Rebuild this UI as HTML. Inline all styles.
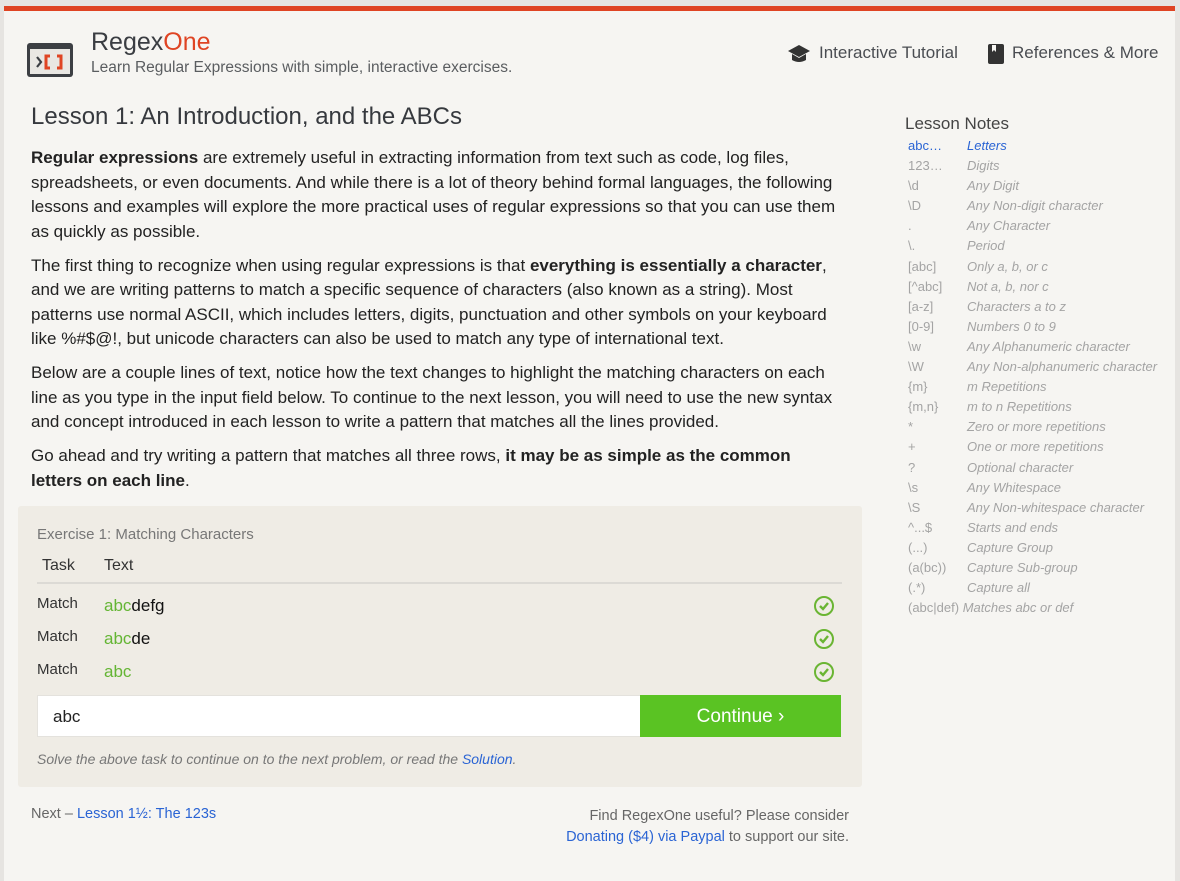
<!DOCTYPE html>
<html><head><meta charset="utf-8"><style>
*{margin:0;padding:0;box-sizing:border-box}
body{width:1180px;height:881px;background:#e6e4e1;font-family:"Liberation Sans",sans-serif;overflow:hidden;position:relative}
#page{position:absolute;left:4px;top:6px;width:1171px;height:875px;background:#f6f5f2;border-top:5px solid #df4423}
.abs{position:absolute}
.logo{left:23px;top:32px;width:46px;height:34px;background:#3c3f44;border-radius:3px}
.logo i{position:absolute;left:3px;top:6px;width:40px;height:25px;background:#e9e7e3}
h1{font-weight:normal;font-size:25px;color:#3a3d42;left:87px;top:17px}
.sub{font-size:15.5px;color:#5a5d60;left:87px;top:48px}
.nav{font-size:17px;color:#4a4d52;top:32px}
h2{font-weight:normal;font-size:24px;color:#36393e;left:27px;top:92px}
.txt{left:27px;top:135px;width:860px;font-size:17px;line-height:24.5px;color:#222;white-space:nowrap}
.txt p{margin-bottom:9.5px}
.ex{left:14px;top:495px;width:844px;height:281px;background:#efece5;border-radius:3px}
.notes{left:901px;top:100px;font-size:13px;color:#a4a4a4}
.notes .r{height:20.1px;white-space:nowrap}
.notes .r span{display:inline-block;width:62px;padding-left:3px}
.notes .r em{font-style:italic}
a{color:#2a64d4;text-decoration:none}
.chk{position:absolute;left:796px;width:20px;height:20px;border:2.5px solid #6ab533;border-radius:50%}
</style></head><body>
<div id="page">
<div class="abs logo"><i></i><svg class="abs" style="left:5px;top:10px" width="36" height="18"><path d="M5 4 L9 9 L5 14" stroke="#3c3f44" stroke-width="2.2" fill="none"/><path d="M18 3 h-4 v12 h4 M25 3 h4 v12 h-4" stroke="#df4423" stroke-width="3" fill="none"/></svg></div>
<h1 class="abs">Regex<span style="color:#df4423">One</span></h1>
<div class="abs sub">Learn Regular Expressions with simple, interactive exercises.</div>
<svg class="abs" style="left:783px;top:33px" width="24" height="20"><path d="M12 1 L23 7 L12 13 L1 7Z" fill="#333"/><path d="M5 10 v6 q7 4 14 0 v-6 l-7 4z" fill="#333"/></svg>
<div class="abs nav" style="left:815px">Interactive Tutorial</div>
<svg class="abs" style="left:983px;top:32px" width="18" height="22"><rect x="1" y="1" width="16" height="20" rx="2" fill="#333"/><path d="M5 2 v7 l2 -2 l2 2 v-7z" fill="#f6f5f2"/></svg>
<div class="abs nav" style="left:1008px">References &amp; More</div>
<h2 class="abs">Lesson 1: An Introduction, and the ABCs</h2>
<div class="abs txt">
<p><b>Regular expressions</b> are extremely useful in extracting information from text such as code, log files,<br>spreadsheets, or even documents. And while there is a lot of theory behind formal languages, the following<br>lessons and examples will explore the more practical uses of regular expressions so that you can use them<br>as quickly as possible.</p>
<p>The first thing to recognize when using regular expressions is that <b>everything is essentially a character</b>,<br>and we are writing patterns to match a specific sequence of characters (also known as a string). Most<br>patterns use normal ASCII, which includes letters, digits, punctuation and other symbols on your keyboard<br>like %#$@!, but unicode characters can also be used to match any type of international text.</p>
<p>Below are a couple lines of text, notice how the text changes to highlight the matching characters on each<br>line as you type in the input field below. To continue to the next lesson, you will need to use the new syntax<br>and concept introduced in each lesson to write a pattern that matches all the lines provided.</p>
<p>Go ahead and try writing a pattern that matches all three rows, <b>it may be as simple as the common<br>letters on each line</b>.</p>
</div>
<div class="abs ex">
<div class="abs" style="left:19px;top:20px;font-size:15px;color:#777">Exercise 1: Matching Characters</div>
<div class="abs" style="left:24px;top:51px;font-size:16px;color:#333">Task</div>
<div class="abs" style="left:86px;top:51px;font-size:16px;color:#333">Text</div>
<div class="abs" style="left:19px;top:76px;width:805px;height:2px;background:#dcdad5"></div>
<div class="abs" style="left:19px;top:89px;font-size:15px;color:#333">Match</div>
<div class="abs" style="left:86px;top:90px;font-size:17px;color:#111"><span style="color:#64b534">abc</span>defg</div>
<div class="abs" style="left:19px;top:122px;font-size:15px;color:#333">Match</div>
<div class="abs" style="left:86px;top:123px;font-size:17px;color:#111"><span style="color:#64b534">abc</span>de</div>
<div class="abs" style="left:19px;top:155px;font-size:15px;color:#333">Match</div>
<div class="abs" style="left:86px;top:156px;font-size:17px;color:#64b534">abc</div>
<div class="chk" style="top:90px"></div><div class="chk" style="top:123px"></div><div class="chk" style="top:156px"></div>
<svg class="abs" style="left:796px;top:90px" width="20" height="90"><g stroke="#6ab533" stroke-width="2.4" fill="none"><path d="M6 10 l3 3 l5 -6"/><path d="M6 43 l3 3 l5 -6"/><path d="M6 76 l3 3 l5 -6"/></g></svg>
<div class="abs" style="left:19px;top:189px;width:604px;height:42px;background:#fff;border:1px solid #e4e2dd;font-size:17px;color:#222;padding:11px 0 0 15px">abc</div>
<div class="abs" style="left:622px;top:189px;width:201px;height:42px;background:#5ac323;color:#fff;font-size:19px;text-align:center;line-height:44px">Continue ›</div>
<div class="abs" style="left:19px;top:245px;font-size:14px;font-style:italic;color:#777">Solve the above task to continue on to the next problem, or read the <a>Solution</a>.</div>
</div>
<div class="abs" style="left:27px;top:795px;font-size:14.5px;color:#666">Next – <a>Lesson 1½: The 123s</a></div>
<div class="abs" style="right:326px;top:795px;font-size:14.5px;color:#666;text-align:right;line-height:21px">Find RegexOne useful? Please consider<br><a>Donating ($4) via Paypal</a> to support our site.</div>
<div class="abs" style="left:901px;top:103px;font-size:17px;color:#444">Lesson Notes</div>
<div class="abs notes" style="top:127px">
<div class="r" style="color:#2a64d4"><span>abc…</span><em>Letters</em></div>
<div class="r"><span>123…</span><em>Digits</em></div>
<div class="r"><span>\d</span><em>Any Digit</em></div>
<div class="r"><span>\D</span><em>Any Non-digit character</em></div>
<div class="r"><span>.</span><em>Any Character</em></div>
<div class="r"><span>\.</span><em>Period</em></div>
<div class="r"><span>[abc]</span><em>Only a, b, or c</em></div>
<div class="r"><span>[^abc]</span><em>Not a, b, nor c</em></div>
<div class="r"><span>[a-z]</span><em>Characters a to z</em></div>
<div class="r"><span>[0-9]</span><em>Numbers 0 to 9</em></div>
<div class="r"><span>\w</span><em>Any Alphanumeric character</em></div>
<div class="r"><span>\W</span><em>Any Non-alphanumeric character</em></div>
<div class="r"><span>{m}</span><em>m Repetitions</em></div>
<div class="r"><span>{m,n}</span><em>m to n Repetitions</em></div>
<div class="r"><span>*</span><em>Zero or more repetitions</em></div>
<div class="r"><span>+</span><em>One or more repetitions</em></div>
<div class="r"><span>?</span><em>Optional character</em></div>
<div class="r"><span>\s</span><em>Any Whitespace</em></div>
<div class="r"><span>\S</span><em>Any Non-whitespace character</em></div>
<div class="r"><span>^...$</span><em>Starts and ends</em></div>
<div class="r"><span>(...)</span><em>Capture Group</em></div>
<div class="r"><span>(a(bc))</span><em>Capture Sub-group</em></div>
<div class="r"><span>(.*)</span><em>Capture all</em></div>
<div class="r"><span style="width:auto">(abc|def)</span> <em>Matches abc or def</em></div>
</div>
</div>
</body></html>
